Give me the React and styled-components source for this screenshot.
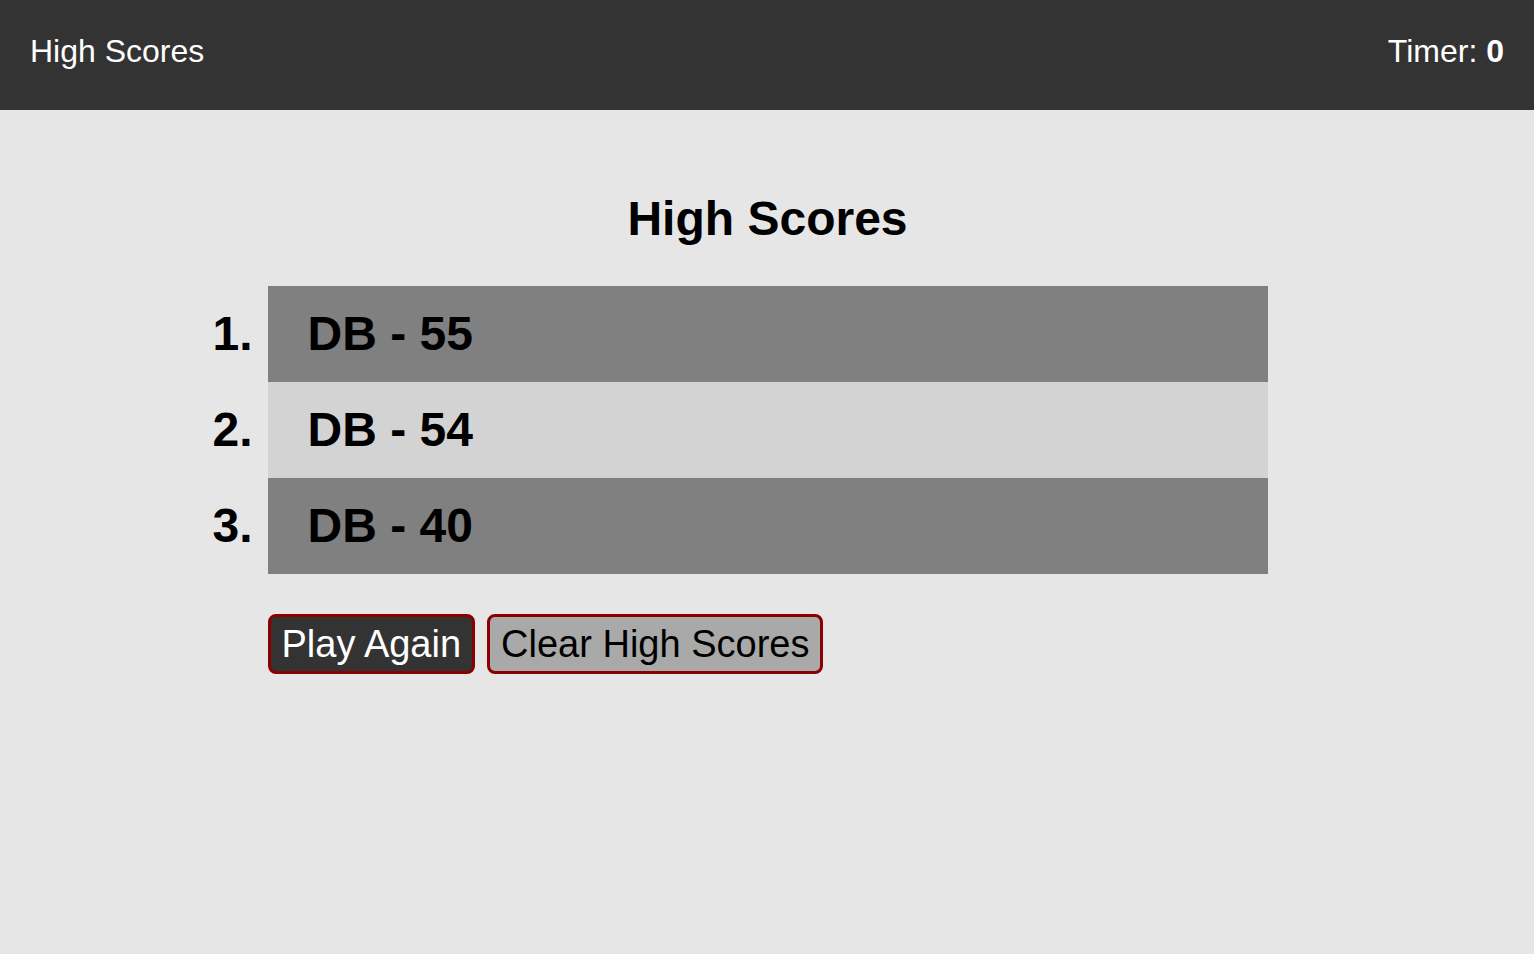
import React from 'react'
import styled, { createGlobalStyle } from 'styled-components'

const scores = [
    { initials: 'DB', score: 55 },
    { initials: 'DB', score: 54 },
    { initials: 'DB', score: 40 },
]

function App() {
    return (
        <>
            <GlobalStyle />
            <Header>
                <HeaderLink>High Scores</HeaderLink>
                <Timer>
                    Timer: <strong>0</strong>
                </Timer>
            </Header>
            <Main>
                <Title>High Scores</Title>
                <ScoreList>
                    {scores.map((s, i) => (
                        <ScoreRow key={i}>
                            <Rank>{i + 1}.</Rank>
                            <ScoreEntry $odd={i % 2 === 0}>
                                {s.initials} - {s.score}
                            </ScoreEntry>
                        </ScoreRow>
                    ))}
                </ScoreList>
                <Buttons>
                    <Button>Play Again</Button>
                    <Button $secondary>Clear High Scores</Button>
                </Buttons>
            </Main>
        </>
    )
}

export default App

const GlobalStyle = createGlobalStyle`
    html, body {
        margin: 0;
        padding: 0;
        background: #e6e6e6;
        font-family: "Liberation Sans", Arial, sans-serif;
        min-height: 100%;
    }
`

const Header = styled.header`
    height: 110px;
    box-sizing: border-box;
    padding: 33px 30px 0;
    background: #333333;
    color: #ffffff;
    display: flex;
    justify-content: space-between;
    align-items: flex-start;
    font-size: 32px;
    line-height: 1.15;
`

const HeaderLink = styled.div``

const Timer = styled.div`
    strong {
        font-weight: bold;
    }
`

const Main = styled.main`
    width: 1001px;
    box-sizing: border-box;
    padding: 81px 0 0 1px;
    margin: 0 auto;
`

const Title = styled.h1`
    margin: 0 0 40px;
    text-align: center;
    font-size: 48px;
    line-height: 1.15;
    font-weight: bold;
    color: #000;
`

const ScoreList = styled.ol`
    list-style: none;
    margin: 0;
    padding: 0;
`

const ScoreRow = styled.li`
    position: relative;
    display: flex;
`

const Rank = styled.span`
    position: absolute;
    right: 100%;
    margin-right: 15px;
    top: 20px;
    font-size: 48px;
    font-weight: bold;
    line-height: 56px;
`

const ScoreEntry = styled.div`
    flex: 1;
    background: ${p => (p.$odd ? '#808080' : '#d3d3d3')};
    padding: 20px 40px;
    font-size: 48px;
    font-weight: bold;
    line-height: 56px;
    color: #000;
`

const Buttons = styled.div`
    display: flex;
    gap: 12px;
    margin-top: 40px;
`

const Button = styled.button`
    font-family: "Liberation Sans", Arial, sans-serif;
    font-size: 38px;
    line-height: 44px;
    padding: 5px 11px;
    border: 3px solid #8b0000;
    border-radius: 8px;
    background: ${p => (p.$secondary ? '#a9a9a9' : '#333333')};
    color: ${p => (p.$secondary ? '#000000' : '#ffffff')};
    cursor: pointer;
`
